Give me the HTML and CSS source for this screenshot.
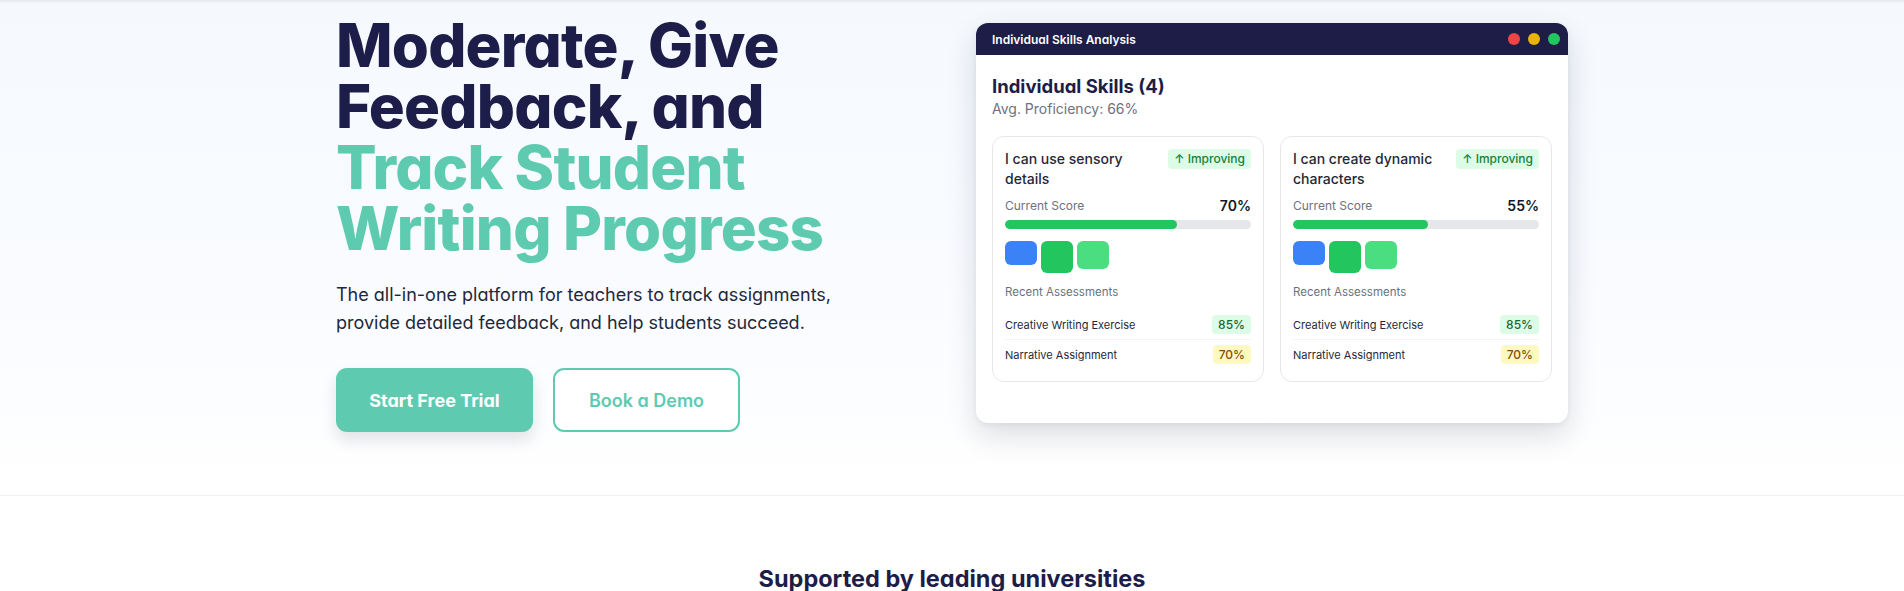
FILE: index.html
```html
<!DOCTYPE html>
<html lang="en">
<head>
<meta charset="utf-8">
<title>Moderate, Give Feedback</title>
<link rel="stylesheet" href="styles.css">
</head>
<body>
<div class="topshade"></div>
<section class="hero">
  <div class="container hero-grid">
    <div class="hero-copy">
      <h1 class="hero-title">
        <span class="line dark">Moderate, Give</span>
        <span class="line dark">Feedback, and</span>
        <span class="line accent">Track Student</span>
        <span class="line accent">Writing Progress</span>
      </h1>
      <p class="hero-lead">The all-in-one platform for teachers to track assignments, provide detailed feedback, and help students succeed.</p>
      <div class="hero-actions">
        <a class="btn btn-primary" href="#">Start Free Trial</a>
        <a class="btn btn-outline" href="#">Book a Demo</a>
      </div>
    </div>
    <div class="hero-visual">
      <div class="window">
        <div class="window-bar">
          <span class="window-title">Individual Skills Analysis</span>
          <span class="dots"><i class="dot red"></i><i class="dot yellow"></i><i class="dot green"></i></span>
        </div>
        <div class="window-body">
          <h2 class="skills-title">Individual Skills (4)</h2>
          <p class="skills-sub">Avg. Proficiency: 66%</p>
          <div class="skills-grid">
            <div class="skill-card">
              <div class="skill-head">
                <span class="skill-name">I can use sensory details</span>
                <span class="trend">↑ Improving</span>
              </div>
              <div class="score-row"><span class="score-label">Current Score</span><span class="score-val">70%</span></div>
              <div class="bar"><div class="bar-fill" style="width:70%"></div></div>
              <div class="blocks"><i class="blk b1"></i><i class="blk b2"></i><i class="blk b3"></i></div>
              <div class="recent-label">Recent Assessments</div>
              <div class="assess-list">
                <div class="assess"><span>Creative Writing Exercise</span><span class="pill good">85%</span></div>
                <div class="assess"><span>Narrative Assignment</span><span class="pill mid">70%</span></div>
              </div>
            </div>
            <div class="skill-card">
              <div class="skill-head">
                <span class="skill-name">I can create dynamic characters</span>
                <span class="trend">↑ Improving</span>
              </div>
              <div class="score-row"><span class="score-label">Current Score</span><span class="score-val">55%</span></div>
              <div class="bar"><div class="bar-fill" style="width:55%"></div></div>
              <div class="blocks"><i class="blk b1"></i><i class="blk b2"></i><i class="blk b3"></i></div>
              <div class="recent-label">Recent Assessments</div>
              <div class="assess-list">
                <div class="assess"><span>Creative Writing Exercise</span><span class="pill good">85%</span></div>
                <div class="assess"><span>Narrative Assignment</span><span class="pill mid">70%</span></div>
              </div>
            </div>
          </div>
        </div>
      </div>
    </div>
  </div>
</section>
<section class="support">
  <h2 class="support-title">Supported by leading universities</h2>
</section>
</body>
</html>
```

FILE: styles.css
```css
* { box-sizing: border-box; }
html, body { margin: 0; padding: 0; }
body {
  font-family: Inter, "Noto Sans", sans-serif;
  font-feature-settings: "cv11";
  color: #1e293b;
  background: #ffffff;
}
.topshade {
  height: 4px;
  background: linear-gradient(to bottom, #e6e9ed, #f5f9fe);
}
.hero {
  background: linear-gradient(to bottom, #f5f9fe 0%, #f9fbff 55%, #ffffff 100%);
  border-bottom: 1px solid #f0f1f3;
  height: 492px;
}
.container {
  max-width: 1280px;
  margin: 0 auto;
  padding: 0 24px;
}
.hero-grid {
  display: grid;
  grid-template-columns: 1fr 1fr;
  column-gap: 48px;
  align-items: start;
}
.hero-copy { padding-top: 11px; }
.hero-title {
  margin: 0;
  font-size: 60px;
  line-height: 61px;
  font-weight: 800;
  letter-spacing: -0.8px;
}
.hero-title .line { display: block; }
.hero-title .dark { color: #1d1d4a; }
.hero-title .accent { color: #5ecbb1; }
.hero-lead {
  margin: 22px 0 0;
  font-size: 18px;
  line-height: 28px;
  color: #1e293b;
  max-width: 525px;
}
.hero-actions {
  display: flex;
  gap: 20px;
  margin-top: 31px;
}
.btn {
  display: inline-flex;
  align-items: center;
  justify-content: center;
  height: 64px;
  border-radius: 11px;
  font-size: 18px;
  font-weight: 700;
  text-decoration: none;
}
.btn-primary {
  width: 197px;
  background: #5ecbb1;
  color: #ffffff;
  box-shadow: 0 8px 16px rgba(15, 23, 42, 0.12);
}
.btn-outline {
  width: 187px;
  background: #ffffff;
  color: #5ecbb1;
  border: 2px solid #5ecbb1;
  font-weight: 600;
}
.hero-visual { padding-top: 19px; }
.window {
  height: 400px;
  background: #ffffff;
  border-radius: 12px;
  overflow: hidden;
  box-shadow: 0 12px 30px rgba(15, 23, 42, 0.14), 0 2px 6px rgba(15, 23, 42, 0.05);
}
.window-bar {
  height: 32px;
  background: #1d1d48;
  display: flex;
  align-items: center;
  justify-content: space-between;
  padding: 0 8px 0 16px;
}
.window-title {
  color: #ffffff;
  font-size: 12px;
  font-weight: 600;
}
.dots { display: flex; gap: 8px; }
.dot { width: 12px; height: 12px; border-radius: 50%; display: block; }
.dot.red { background: #ef4444; }
.dot.yellow { background: #eab308; }
.dot.green { background: #22c55e; }
.window-body { padding: 18px 16px 16px; }
.skills-title {
  margin: 0;
  font-size: 18.5px;
  line-height: 26px;
  font-weight: 700;
  color: #1d1d48;
}
.skills-sub {
  margin: 0;
  font-size: 14px;
  line-height: 20px;
  color: #6b7280;
}
.skills-grid {
  display: grid;
  grid-template-columns: 1fr 1fr;
  gap: 16px;
  margin-top: 17px;
}
.skill-card {
  border: 1px solid #e5e7eb;
  border-radius: 12px;
  padding: 12px;
  font-feature-settings: normal;
}
.skill-head {
  display: flex;
  justify-content: space-between;
  align-items: flex-start;
  gap: 8px;
}
.skill-name {
  font-size: 14px;
  line-height: 20px;
  font-weight: 500;
  color: #1f2937;
}
.trend {
  flex: none;
  background: #dcfce7;
  color: #15803d;
  font-size: 12px;
  line-height: 20px;
  padding: 0 6px;
  border-radius: 4px;
  font-weight: 500;
}
.score-row {
  display: flex;
  justify-content: space-between;
  align-items: center;
  margin-top: 8px;
}
.score-label { font-size: 12px; color: #6b7280; }
.score-val { font-size: 14px; font-weight: 600; color: #111827; }
.bar {
  height: 9px;
  background: #e5e7eb;
  border-radius: 9999px;
  margin-top: 6px;
  overflow: hidden;
}
.bar-fill { height: 100%; background: #22c55e; border-radius: 9999px; }
.blocks {
  display: flex;
  gap: 4px;
  align-items: flex-start;
  margin-top: 12px;
}
.blk { display: block; width: 32px; border-radius: 6px; }
.b1 { height: 24px; background: #3b82f6; }
.b2 { height: 32px; background: #22c55e; }
.b3 { height: 28px; background: #4ade80; }
.recent-label {
  font-size: 11.5px;
  color: #6b7280;
  margin-top: 11px;
  line-height: 16px;
}
.assess-list { margin-top: 10px; }
.assess {
  display: flex;
  justify-content: space-between;
  align-items: center;
  font-size: 11px;
  color: #1f2937;
  padding: 5px 0;
}
.assess + .assess { border-top: 1px solid #f3f4f6; }
.pill {
  font-size: 12px;
  line-height: 19px;
  padding: 0 6px;
  border-radius: 4px;
  font-weight: 500;
}
.pill.good { background: #dcfce7; color: #166534; }
.pill.mid { background: #fef9c3; color: #854d0e; }
.support {
  padding-top: 68px;
  text-align: center;
}
.support-title {
  margin: 0;
  font-size: 23.5px;
  font-weight: 700;
  color: #1d1d48;
}
```
